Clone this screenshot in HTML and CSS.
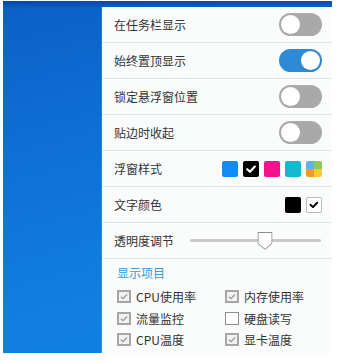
FILE: index.html
```html
<!DOCTYPE html>
<html lang="zh">
<head>
<meta charset="utf-8">
<link rel="stylesheet" href="styles.css">
</head>
<body>
<div class="screen">
  <div class="panel">
    <div class="row">
      <span class="label">在任务栏显示</span>
      <span class="toggle"><span class="knob"></span></span>
    </div>
    <div class="row">
      <span class="label">始终置顶显示</span>
      <span class="toggle on"><span class="knob"></span></span>
    </div>
    <div class="row">
      <span class="label">锁定悬浮窗位置</span>
      <span class="toggle"><span class="knob"></span></span>
    </div>
    <div class="row">
      <span class="label">贴边时收起</span>
      <span class="toggle"><span class="knob"></span></span>
    </div>
    <div class="row">
      <span class="label">浮窗样式</span>
      <span class="swatches">
        <span class="sw sw-blue"></span>
        <span class="sw sw-black"><svg viewBox="0 0 16 16" width="16" height="16"><path d="M4.2 8.2 L7 10.8 L11.8 5.6" fill="none" stroke="#fff" stroke-width="2.2" stroke-linecap="round" stroke-linejoin="round"/></svg></span>
        <span class="sw sw-pink"></span>
        <span class="sw sw-teal"></span>
        <span class="sw-multi"><span class="q q1"></span><span class="q q2"></span><span class="q q3"></span><span class="q q4"></span></span>
      </span>
    </div>
    <div class="row">
      <span class="label">文字颜色</span>
      <span class="swatches">
        <span class="sw sw-black"></span>
        <span class="sw sw-white"><svg viewBox="0 0 16 16" width="14" height="14"><path d="M4 7.8 L6.8 10.4 L11.6 5.4" fill="none" stroke="#000" stroke-width="2.2" stroke-linecap="round" stroke-linejoin="round"/></svg></span>
      </span>
    </div>
    <div class="row">
      <span class="label">透明度调节</span>
      <span class="slider">
        <span class="track"></span>
        <svg class="thumb" style="left: 57%" viewBox="0 0 15 18" width="15" height="18"><path d="M0.5 0.5 H14.5 V11.5 L7.5 17.3 L0.5 11.5 Z" fill="#fff" stroke="#8a8a8a" stroke-width="1"/></svg>
      </span>
    </div>
    <div class="section">
      <div class="section-title">显示项目</div>
      <div class="checks">
        <label class="check"><span class="box checked"><svg viewBox="0 0 12 12" width="11" height="11"><path d="M2.3 6.2 L4.9 8.6 L9.6 3.6" fill="none" stroke="#9c9c9c" stroke-width="1.6"/></svg></span>CPU使用率</label>
        <label class="check"><span class="box checked"><svg viewBox="0 0 12 12" width="11" height="11"><path d="M2.3 6.2 L4.9 8.6 L9.6 3.6" fill="none" stroke="#9c9c9c" stroke-width="1.6"/></svg></span>内存使用率</label>
        <label class="check"><span class="box checked"><svg viewBox="0 0 12 12" width="11" height="11"><path d="M2.3 6.2 L4.9 8.6 L9.6 3.6" fill="none" stroke="#9c9c9c" stroke-width="1.6"/></svg></span>流量监控</label>
        <label class="check"><span class="box"></span>硬盘读写</label>
        <label class="check"><span class="box checked"><svg viewBox="0 0 12 12" width="11" height="11"><path d="M2.3 6.2 L4.9 8.6 L9.6 3.6" fill="none" stroke="#9c9c9c" stroke-width="1.6"/></svg></span>CPU温度</label>
        <label class="check"><span class="box checked"><svg viewBox="0 0 12 12" width="11" height="11"><path d="M2.3 6.2 L4.9 8.6 L9.6 3.6" fill="none" stroke="#9c9c9c" stroke-width="1.6"/></svg></span>显卡温度</label>
        <span class="check"><span class="box"></span></span>
        <span class="check"><span class="box"></span></span>
      </div>
    </div>
  </div>
</div>
</body>
</html>
```

FILE: styles.css
```css
html, body {
  margin: 0;
  padding: 0;
  background: #ffffff;
}

body {
  font-family: "Noto Sans CJK SC", "Noto Sans", sans-serif;
  font-size: 12px;
  color: #333333;
}

.screen {
  box-sizing: border-box;
  width: 329px;
  height: 352px;
  margin: 1px 0 0 3px;
  padding: 6px 0 0 99px;
  overflow: hidden;
  background:
    linear-gradient(180deg, rgba(8, 50, 140, 0.55) 0px, rgba(8, 50, 140, 0) 8px),
    linear-gradient(165deg, #0b60c6 0%, #0e6fd6 35%, #117ddf 70%, #1383e6 100%);
}

.panel {
  width: 230px;
  background: #fafbfb;
  box-shadow: -1px 0 0 rgba(255, 255, 255, 0.12);
}

.row {
  box-sizing: border-box;
  height: 36px;
  border-bottom: 1px solid #e2e4e6;
  padding: 0 10px 0 12px;
  display: flex;
  align-items: center;
  justify-content: space-between;
}

.label {
  color: #333;
  white-space: nowrap;
}

.toggle {
  box-sizing: border-box;
  width: 43px;
  height: 23px;
  border-radius: 12px;
  background: #a9a9a9;
  padding: 2px;
  display: flex;
  justify-content: flex-start;
}

.toggle.on {
  background: #2f8ad6;
  justify-content: flex-end;
}

.knob {
  width: 19px;
  height: 19px;
  border-radius: 50%;
  background: #ffffff;
}

.swatches {
  display: flex;
  gap: 5px;
  align-items: center;
}

.sw {
  box-sizing: border-box;
  width: 16px;
  height: 16px;
  border-radius: 2px;
  display: flex;
  align-items: center;
  justify-content: center;
}

.sw-blue { background: #118cf0; }
.sw-black { background: #000000; }
.sw-pink { background: #f2128d; }
.sw-teal { background: #12b9d1; }

.sw-white {
  background: #ffffff;
  border: 1px solid #b8b8b8;
}

.sw-multi {
  width: 16px;
  height: 16px;
  border-radius: 2px;
  overflow: hidden;
  display: grid;
  grid-template-columns: 8px 8px;
  grid-template-rows: 8px 8px;
}

.q { display: block; }
.q1 { background: #5fb3e8; }
.q2 { background: #8dcb52; }
.q3 { background: #f59a23; }
.q4 { background: #fecb2f; }

.slider {
  position: relative;
  flex: 1;
  height: 18px;
  margin-left: 16px;
  margin-right: 1px;
  display: flex;
  align-items: center;
}

.track {
  flex: 1;
  height: 3px;
  border-radius: 2px;
  background: #c9c9c9;
}

.thumb {
  position: absolute;
  top: 0;
  transform: translateX(-50%);
}

.section {
  padding: 6px 0 0 15px;
}

.section-title {
  color: #3d98d6;
  line-height: 16px;
  height: 16px;
}

.checks {
  margin-top: 5px;
  display: grid;
  grid-template-columns: 108px 1fr;
  grid-auto-rows: 21.5px;
}

.check {
  display: flex;
  align-items: center;
  gap: 5px;
  color: #333;
  white-space: nowrap;
}

.box {
  box-sizing: border-box;
  width: 14px;
  height: 13px;
  border: 2px solid #a6a6a6;
  background: #f2f2f2;
  display: flex;
  align-items: center;
  justify-content: center;
}

.box:not(.checked) {
  border: 1.5px solid #8c8c8c;
  background: #ffffff;
}
```
